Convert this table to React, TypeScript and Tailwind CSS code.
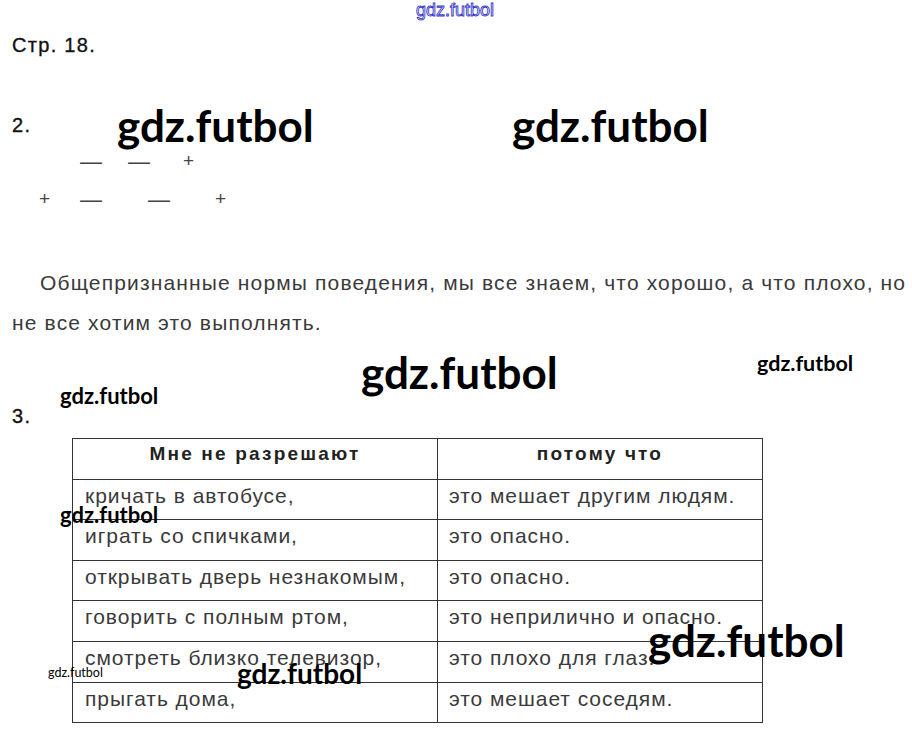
export default function App() {
  const rows = [
    ["кричать в автобусе,", "это мешает другим людям."],
    ["играть со спичками,", "это опасно."],
    ["открывать дверь незнакомым,", "это опасно."],
    ["говорить с полным ртом,", "это неприлично и опасно."],
    ["смотреть близко телевизор,", "это плохо для глаз."],
    ["прыгать дома,", "это мешает соседям."],
  ];

  const wm = "absolute font-['Lato',sans-serif] font-bold text-black leading-none whitespace-nowrap";
  const num = "text-[20px] leading-[22px] tracking-[1.3px] text-[#111] [-webkit-text-stroke:0.35px_#111]";

  return (
    <div className="relative w-[912px] h-[734px] overflow-hidden bg-white font-['Liberation_Sans',Arial,sans-serif] text-[#222]">
      {/* top outlined mark */}
      <div className="absolute left-[416px] top-[1px] text-[18px] leading-none font-['Liberation_Sans',sans-serif] text-white [-webkit-text-stroke:0.9px_#3b3bc8]">
        gdz.futbol
      </div>

      <div className="px-3 pt-[34px]">
        <p className={num}>Стр. 18.</p>

        <p className={`mt-[58px] ${num}`}>2.</p>

        {/* signs */}
        <div className="mt-[14px] flex items-center h-[22px] text-[#444]">
          <span className="ml-[68px] w-[48px] text-[22px]">—</span>
          <span className="w-[55px] text-[22px]">—</span>
          <span className="text-[19px]">+</span>
        </div>
        <div className="mt-[16px] flex items-center h-[22px] text-[#444]">
          <span className="ml-[27px] w-[41px] text-[19px]">+</span>
          <span className="w-[68px] text-[22px]">—</span>
          <span className="w-[67px] text-[22px]">—</span>
          <span className="text-[19px]">+</span>
        </div>

        <div className="mt-[53px] text-[21px] leading-[40px] text-[#3a3a3a] tracking-[1.15px]">
          <p className="indent-[28px] whitespace-nowrap">
            Общепризнанные нормы поведения, мы все знаем, что хорошо, а что плохо, но
          </p>
          <p>не все хотим это выполнять.</p>
        </div>

        <p className={`mt-[62px] ${num}`}>3.</p>

        <table className="ml-[60px] mt-[11px] w-[691px] border-collapse text-[21px] text-[#3a3a3a]">
          <thead>
            <tr className="h-[40.6px]">
              <th className="w-[365px] border border-[#333] align-top pt-[1px] text-[19px] font-bold text-[#222] tracking-[2.2px]">
                Мне не разрешают
              </th>
              <th className="border border-[#333] align-top pt-[1px] text-[19px] font-bold text-[#222] tracking-[2.2px]">
                потому что
              </th>
            </tr>
          </thead>
          <tbody>
            {rows.map((r, i) => (
              <tr key={i} className="h-[40.6px]">
                <td className="border border-[#333] align-top pt-0 pl-[12px] tracking-[0.95px]">{r[0]}</td>
                <td className="border border-[#333] align-top pt-0 pl-[11px] tracking-[0.95px]">{r[1]}</td>
              </tr>
            ))}
          </tbody>
        </table>
      </div>

      {/* watermarks */}
      <div className={`${wm} left-[117px] top-[103px] text-[44px]`}>gdz.futbol</div>
      <div className={`${wm} left-[512px] top-[103px] text-[44px]`}>gdz.futbol</div>
      <div className={`${wm} left-[361px] top-[350px] text-[44px]`}>gdz.futbol</div>
      <div className={`${wm} left-[757px] top-[353px] text-[21.5px]`}>gdz.futbol</div>
      <div className={`${wm} left-[60px] top-[385px] text-[22px]`}>gdz.futbol</div>
      <div className={`${wm} left-[60px] top-[504px] text-[22px]`}>gdz.futbol</div>
      <div className={`${wm} left-[648px] top-[618px] text-[44px]`}>gdz.futbol</div>
      <div className={`${wm} left-[237px] top-[659px] text-[28px]`}>gdz.futbol</div>
      <div className="absolute left-[48px] top-[667px] text-[12.5px] leading-none font-['Lato',sans-serif] text-black">
        gdz.futbol
      </div>
    </div>
  );
}
